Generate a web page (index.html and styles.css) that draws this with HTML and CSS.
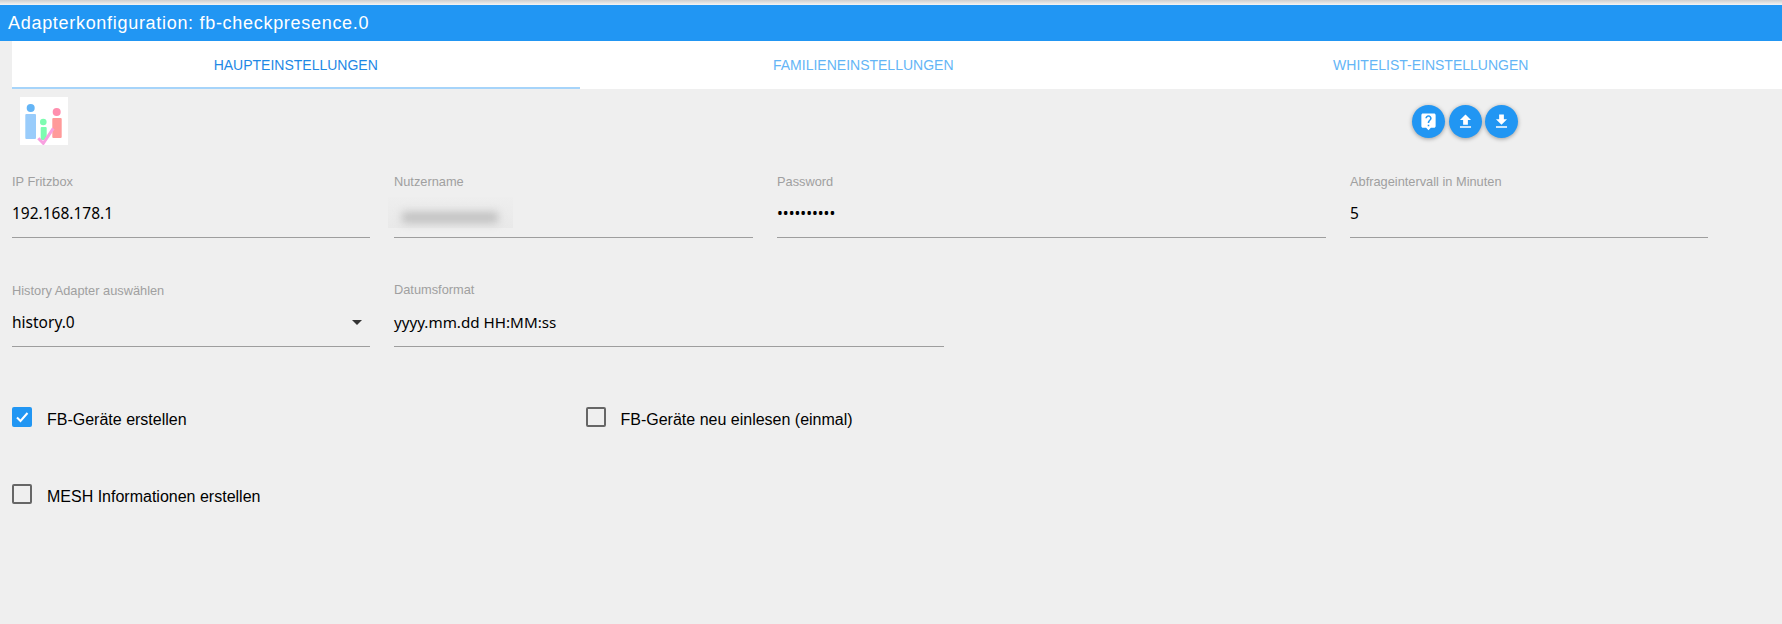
FILE: index.html
```html
<!DOCTYPE html>
<html lang="en">
<head>
    <meta charset="UTF-8">
    <meta name="viewport" content="width=device-width, initial-scale=1.0">
    <title>Adapterkonfiguration</title>
    <link rel="stylesheet" href="styles.css">
</head>
<body>

<div class="topline"></div>
<div class="titlebar">Adapterkonfiguration: fb-checkpresence.0</div>

<div class="tabs">
    <div class="tab active">Haupteinstellungen</div>
    <div class="tab">Familieneinstellungen</div>
    <div class="tab">Whitelist-Einstellungen</div>
</div>

<div class="toolbar">
    <div class="logo">
        <svg width="48" height="48" viewBox="0 0 48 48">
            <circle cx="10.700" cy="11" r="4" fill="#64b5f6"/>
            <rect x="5.300" y="17" width="10.700" height="25" rx="1" fill="#99ccfb"/>
            <circle cx="23.300" cy="25" r="3.300" fill="#7dfcb0"/>
            <rect x="20.700" y="30" width="6" height="13" rx="1" fill="#7dfcb0"/>
            <circle cx="36.700" cy="15" r="4" fill="#ff8fae"/>
            <rect x="32.300" y="21" width="9.400" height="20" rx="1" fill="#ff9a9a"/>
            <path d="M18.300 41.300l5 5 10-15" fill="none" stroke="#f8a0e0" stroke-width="3"/>
        </svg>
    </div>
    <div class="actions">
        <div class="fab">
            <svg viewBox="0 0 24 24"><path d="M19 2H5c-1.110 0-2 .9-2 2v14c0 1.100.89 2 2 2h4l3 3 3-3h4c1.100 0 2-.9 2-2V4c0-1.100-.9-2-2-2zm-6 16h-2v-2h2v2zm2.070-7.750l-.9.92C13.450 11.900 13 12.500 13 14h-2v-.5c0-1.100.45-2.100 1.170-2.830l1.240-1.260c.37-.36.59-.86.59-1.410 0-1.100-.9-2-2-2s-2 .9-2 2H8c0-2.210 1.790-4 4-4s4 1.790 4 4c0 .88-.36 1.680-.93 2.250z"/></svg>
        </div>
        <div class="fab">
            <svg viewBox="0 0 24 24"><path d="M9 16h6v-6h4l-7-7-7 7h4zm-4 2h14v2H5z"/></svg>
        </div>
        <div class="fab">
            <svg viewBox="0 0 24 24"><path d="M19 9h-4V3H9v6H5l7 7 7-7zM5 18v2h14v-2H5z"/></svg>
        </div>
    </div>
</div>

<div class="row row-first">
    <div class="field col-small">
        <div class="field-label">IP Fritzbox</div>
        <div class="field-value">192.168.178.1</div>
    </div>
    <div class="field col-name">
        <div class="field-label">Nutzername</div>
        <div class="field-value blurred"><div class="blur-text"></div></div>
    </div>
    <div class="field col-large">
        <div class="field-label">Password</div>
        <div class="field-value">••••••••••</div>
    </div>
    <div class="field col-small">
        <div class="field-label">Abfrageintervall in Minuten</div>
        <div class="field-value">5</div>
    </div>
</div>

<div class="row row-second">
    <div class="field col-small">
        <div class="field-label label-select">History Adapter auswählen</div>
        <div class="field-value select-value">history.0<span class="caret"></span></div>
    </div>
    <div class="field col-date">
        <div class="field-label">Datumsformat</div>
        <div class="field-value">yyyy.mm.dd HH:MM:ss</div>
    </div>
</div>

<div class="check-row check-row-first">
    <div class="check-item">
        <span class="checkbox checked">
            <svg viewBox="0 0 20 20"><path d="M5 10.500l3.500 3.500L15.500 6" fill="none" stroke="#fff" stroke-width="2"/></svg>
        </span>
        <span>FB-Geräte erstellen</span>
    </div>
    <div class="check-item">
        <span class="checkbox"></span>
        <span>FB-Geräte neu einlesen (einmal)</span>
    </div>
</div>

<div class="check-row check-row-second">
    <div class="check-item">
        <span class="checkbox"></span>
        <span>MESH Informationen erstellen</span>
    </div>
</div>

</body>
</html>
```

FILE: styles.css
```css
html, body {
    height: 100%;
}
body {
    margin: 0;
    background-color: #efefef;
    font-family: 'Liberation Sans', Arial, sans-serif;
    font-size: 16px;
    color: #000;
    overflow: hidden;
}
.topline {
    height: 5px;
    background: linear-gradient(#cfcfcf, #f4f4f4);
}
.titlebar {
    height: 36px;
    line-height: 36px;
    padding-left: 8px;
    background-color: #2196f3;
    color: #fff;
    font-size: 18px;
    letter-spacing: 0.7px;
}
.tabs {
    display: flex;
    height: 48px;
    margin-left: 12px;
    background-color: #fff;
}
.tab {
    width: 567.5px;
    box-sizing: border-box;
    line-height: 48px;
    text-align: center;
    text-transform: uppercase;
    font-size: 14px;
    color: #64b5f6;
}
.tab.active {
    color: #1e88e5;
    border-bottom: 2px solid #a6d4fa;
}
.toolbar {
    display: flex;
    height: 83px;
    padding: 8px 0 0 20px;
    box-sizing: border-box;
}
.logo {
    width: 48px;
    height: 48px;
    background-color: #fff;
}
.actions {
    display: flex;
    gap: 3.500px;
    margin-left: 1344px;
    margin-top: 8px;
}
.fab {
    display: flex;
    align-items: center;
    justify-content: center;
    width: 33px;
    height: 33px;
    border-radius: 50%;
    background-color: #2196f3;
    box-shadow: 0 1px 4px rgba(0, 0, 0, 0.35);
}
.fab svg {
    width: 19px;
    height: 19px;
    fill: #fff;
}
.row {
    display: flex;
    gap: 24px;
    margin-left: 12px;
}
.row-second {
    margin-top: 29px;
}
.field {
    box-sizing: border-box;
    height: 66px;
    border-bottom: 1px solid #9e9e9e;
}
.row-second .field {
    height: 80px;
}
.col-small {
    width: 358px;
}
.col-name {
    width: 359px;
}
.col-large {
    width: 549px;
}
.col-date {
    width: 550px;
}
.field-label {
    height: 20px;
    line-height: 20px;
    font-size: 12.800px;
    color: #a0a0a0;
}
.row-second .field-label {
    margin-top: 13px;
}
.row-second .label-select {
    margin-top: 14px;
}
.field-value {
    height: 34px;
    margin-top: 4px;
    line-height: 34px;
    font-family: 'Noto Sans', sans-serif;
    font-size: 15.500px;
}
.row-second .field-value {
    margin-top: 5px;
}
.row-second .label-select + .field-value {
    margin-top: 4px;
}
.col-date .field-value {
    font-size: 15.200px;
}
.select-value {
    display: flex;
    justify-content: space-between;
    align-items: center;
    padding-right: 6px;
}
.caret {
    width: 0;
    height: 0;
    border-left: 5px solid transparent;
    border-right: 5px solid transparent;
    border-top: 5px solid #333;
    margin-right: 2px;
}
.blurred {
    width: 125px;
    height: 31px;
    margin: 5px 0 0 -6px;
    padding: 15px 0 0 14px;
    box-sizing: border-box;
    background: linear-gradient(#eeeeee, #e9e9e9);
}
.blur-text {
    width: 96px;
    height: 11px;
    background-color: #c0c0c0;
    filter: blur(4px);
}
.check-row {
    display: flex;
    margin-left: 12px;
}
.check-row-first {
    margin-top: 60px;
}
.check-row-second {
    margin-top: 57px;
}
.check-item {
    display: flex;
    align-items: center;
    width: 574px;
    height: 20px;
    gap: 15px;
}
.check-item span:last-child {
    padding-top: 5px;
}
.check-item + .check-item {
    gap: 14.500px;
}
.checkbox {
    flex: none;
    width: 20px;
    height: 20px;
    box-sizing: border-box;
    border: 2px solid #666;
    border-radius: 2px;
}
.checkbox.checked {
    border: none;
    background-color: #2196f3;
}
.checkbox svg {
    display: block;
    width: 20px;
    height: 20px;
}
```
